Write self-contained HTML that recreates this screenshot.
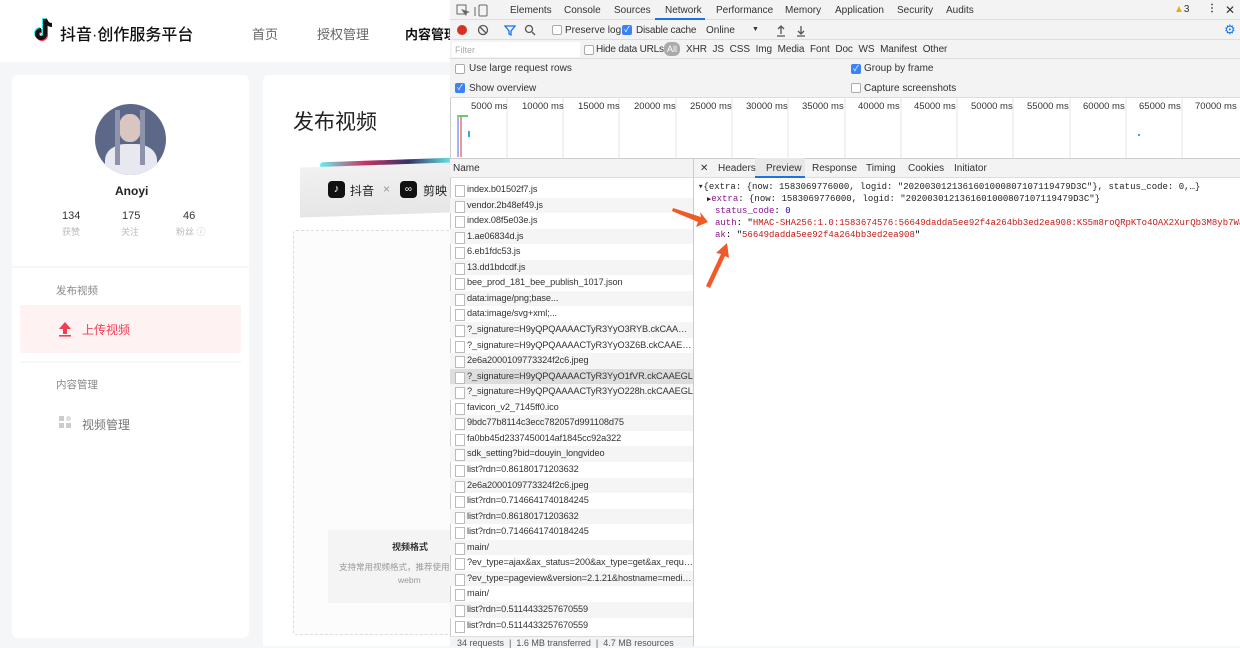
<!DOCTYPE html>
<html><head><meta charset="utf-8"><style>
*{margin:0;padding:0;box-sizing:border-box}
body{width:1240px;height:646px;overflow:hidden;position:relative;background:#f5f6f8;font-family:"Liberation Sans","Noto Sans CJK SC",sans-serif;}
.a{position:absolute;white-space:nowrap}
.dt{font-size:10px;color:#333}
.mono{font-family:"Liberation Mono","DejaVu Sans Mono",monospace;font-size:9px;overflow:hidden}
.cb{position:absolute;width:10px;height:10px;border:1px solid #aaa;border-radius:2px;background:#fff}
.cbk{position:absolute;width:10px;height:10px;border-radius:2px;background:#3b82f6;color:#fff;font-size:8px;line-height:10px;text-align:center}
.row{position:absolute;left:450px;width:243px;height:15.55px;font-size:9.2px;letter-spacing:-0.1px;color:#333;line-height:15.5px;padding-left:17px;white-space:nowrap;overflow:hidden;text-overflow:ellipsis}
.row:before{content:"";position:absolute;left:5px;top:3px;width:8px;height:10px;border:1px solid #bbb;background:#fff}
</style></head><body>
<div class="a" style="left:0;top:0;width:450px;height:62px;background:#fff"></div>
<svg class="a" style="left:34px;top:17px" width="22" height="26" viewBox="0 0 22 26"><path d="M11 2v15a4 4 0 1 1-4-4" fill="none" stroke="#25f4ee" stroke-width="4" transform="translate(-1,-1)"/><path d="M11 2v15a4 4 0 1 1-4-4" fill="none" stroke="#fe2c55" stroke-width="4" transform="translate(1,1)"/><path d="M11 2v15a4 4 0 1 1-4-4M11 2c1 4 4 6 7 6" fill="none" stroke="#111" stroke-width="4"/></svg>
<div class="a" style="left:60px;top:21px;font-size:16px;color:#111;font-weight:500">抖音·创作服务平台</div>
<div class="a" style="left:252px;top:24px;font-size:13px;color:#666">首页</div>
<div class="a" style="left:317px;top:24px;font-size:13px;color:#666">授权管理</div>
<div class="a" style="left:405px;top:24px;font-size:13px;color:#111;font-weight:bold">内容管理</div>
<div class="a" style="left:12px;top:75px;width:237px;height:563px;background:#fff;border-radius:6px"></div>
<div class="a" style="left:95px;top:104px;width:71px;height:71px;border-radius:50%;overflow:hidden;background:#5d6888">
<div class="a" style="left:24px;top:10px;width:22px;height:28px;border-radius:45%;background:#d9c6c0"></div>
<div class="a" style="left:10px;top:40px;width:52px;height:40px;border-radius:40% 40% 0 0;background:#e8e8f0"></div>
<div class="a" style="left:20px;top:6px;width:5px;height:55px;background:#8c93aa"></div>
<div class="a" style="left:45px;top:6px;width:5px;height:55px;background:#8c93aa"></div>
</div>
<div class="a" style="left:115px;top:184px;font-size:12px;color:#222;font-weight:bold">Anoyi</div>
<div class="a" style="left:62px;top:210px;font-size:11px;color:#333">134</div>
<div class="a" style="left:122px;top:210px;font-size:11px;color:#333">175</div>
<div class="a" style="left:183px;top:210px;font-size:11px;color:#333">46</div>
<div class="a" style="left:62px;top:225px;font-size:9px;color:#bbb">获赞</div>
<div class="a" style="left:121px;top:225px;font-size:9px;color:#bbb">关注</div>
<div class="a" style="left:176px;top:225px;font-size:9px;color:#bbb">粉丝 ⓘ</div>
<div class="a" style="left:12px;top:266px;width:237px;height:2px;background:#f5f6f8"></div>
<div class="a" style="left:56px;top:283px;font-size:10.5px;color:#888">发布视频</div>
<div class="a" style="left:20px;top:305px;width:221px;height:48px;background:#fef2f3;border-radius:3px"></div>
<svg class="a" style="left:58px;top:321px" width="14" height="16" viewBox="0 0 14 16"><path d="M7 1L1 8h4v5h4V8h4z" fill="#f23d54"/><rect x="1" y="14" width="12" height="1.6" fill="#f23d54"/></svg>
<div class="a" style="left:82px;top:321px;font-size:12px;color:#f23d54">上传视频</div>
<div class="a" style="left:20px;top:361px;width:221px;height:2px;background:#f5f6f8"></div>
<div class="a" style="left:56px;top:377px;font-size:10.5px;color:#888">内容管理</div>
<svg class="a" style="left:59px;top:416px" width="12" height="13"><rect x="0" y="0" width="5" height="5" fill="#ccc"/><rect x="7" y="0" width="5" height="5" fill="#ddd" rx="2.5"/><rect x="0" y="7" width="5" height="5" fill="#ccc"/><rect x="7" y="7" width="5" height="5" fill="#ccc"/></svg>
<div class="a" style="left:82px;top:416px;font-size:12px;color:#777">视频管理</div>
<div class="a" style="left:263px;top:75px;width:190px;height:571px;background:#fff;border-radius:6px 0 0 0"></div>
<div class="a" style="left:293px;top:106px;font-size:21px;color:#222">发布视频</div>
<div class="a" style="left:320px;top:160px;width:133px;height:6px;background:linear-gradient(90deg,#6ee,#c36,#336,#6ee);border-radius:3px;transform:rotate(-2deg)"></div>
<div class="a" style="left:300px;top:165px;width:153px;height:50px;background:linear-gradient(180deg,#f1f1f1,#e6e6e6);transform:skewY(-2deg)"></div>
<div class="a" style="left:328px;top:181px;width:17px;height:17px;background:#111;border-radius:4px;color:#fff;font-size:11px;text-align:center;line-height:17px">♪</div>
<div class="a" style="left:350px;top:182px;font-size:12px;color:#222">抖音</div>
<div class="a" style="left:383px;top:182px;font-size:12px;color:#999">×</div>
<div class="a" style="left:400px;top:181px;width:17px;height:17px;background:#111;border-radius:4px;color:#fff;font-size:10px;text-align:center;line-height:17px">∞</div>
<div class="a" style="left:423px;top:182px;font-size:12px;color:#222">剪映</div>
<div class="a" style="left:293px;top:230px;width:170px;height:405px;border:1px dashed #ddd;background:#fcfcfc;border-radius:3px"></div>
<div class="a" style="left:328px;top:530px;width:130px;height:73px;background:#f4f4f4"></div>
<div class="a" style="left:392px;top:540px;font-size:9px;color:#333;font-weight:bold">视频格式</div>
<div class="a" style="left:339px;top:561px;font-size:8.5px;color:#999">支持常用视频格式，推荐使用</div>
<div class="a" style="left:398px;top:575px;font-size:8.5px;color:#999">webm</div>
<div class="a" style="left:450px;top:0;width:790px;height:646px;background:#fff;border-left:1px solid #ccc"></div>
<div class="a" style="left:450px;top:0;width:790px;height:20px;background:#f3f3f3;border-bottom:1px solid #ddd"></div>
<svg class="a" style="left:456px;top:4px" width="34" height="13"><rect x="1" y="1" width="9" height="9" fill="none" stroke="#666"/><path d="M5 5l5 7 1-3 3-1z" fill="#666"/><rect x="23" y="1" width="8" height="11" rx="1" fill="none" stroke="#666"/><line x1="19" y1="3" x2="19" y2="12" stroke="#666"/></svg>
<div class="a" style="left:655px;top:0;width:50px;height:20px;border-bottom:2px solid #1a73e8"></div>
<div class="a dt" style="left:510px;top:5px;color:#333">Elements</div>
<div class="a dt" style="left:564px;top:5px">Console</div>
<div class="a dt" style="left:614px;top:5px">Sources</div>
<div class="a dt" style="left:665px;top:5px">Network</div>
<div class="a dt" style="left:716px;top:5px">Performance</div>
<div class="a dt" style="left:785px;top:5px">Memory</div>
<div class="a dt" style="left:835px;top:5px">Application</div>
<div class="a dt" style="left:897px;top:5px">Security</div>
<div class="a dt" style="left:946px;top:5px">Audits</div>
<div class="a dt" style="left:1174px;top:4px"><span style="color:#f2a900">▲</span>3</div>
<div class="a dt" style="left:1207px;top:3px;font-weight:bold">⋮</div>
<div class="a dt" style="left:1225px;top:3px;font-size:12px">✕</div>
<div class="a" style="left:450px;top:20px;width:790px;height:20px;background:#f3f3f3;border-bottom:1px solid #ddd"></div>
<div class="a" style="left:457px;top:25px;width:10px;height:10px;border-radius:50%;background:#d93025"></div>
<svg class="a" style="left:477px;top:24px" width="64" height="13"><circle cx="6" cy="6" r="4.5" fill="none" stroke="#555" stroke-width="1.3"/><line x1="3" y1="3" x2="9" y2="9" stroke="#555" stroke-width="1.3"/><path d="M28 2h10l-4 5v4l-2-1V7z" fill="none" stroke="#1a73e8" stroke-width="1.3"/><circle cx="52" cy="5" r="3.5" fill="none" stroke="#555" stroke-width="1.3"/><line x1="55" y1="8" x2="58" y2="11" stroke="#555" stroke-width="1.3"/></svg>
<div class="cb" style="left:552px;top:25px"></div><div class="a dt" style="left:565px;top:25px">Preserve log</div>
<div class="cbk" style="left:622px;top:25px">✓</div><div class="a dt" style="left:636px;top:25px;letter-spacing:-0.2px">Disable cache</div>
<div class="a dt" style="left:706px;top:25px">Online</div><div class="a dt" style="left:752px;top:26px;font-size:7px">▼</div>
<svg class="a" style="left:775px;top:24px" width="32" height="13"><path d="M6 2v8M3 5l3-3 3 3M2 12h8" fill="none" stroke="#555" stroke-width="1.3"/><path d="M26 2v8M23 7l3 3 3-3M22 12h8" fill="none" stroke="#555" stroke-width="1.3"/></svg>
<div class="a dt" style="left:1224px;top:22px;color:#1a73e8;font-size:13px">⚙</div>
<div class="a" style="left:450px;top:40px;width:790px;height:19px;background:#f3f3f3;border-bottom:1px solid #ddd"></div>
<div class="a" style="left:452px;top:42px;width:128px;height:15px;background:#fff"></div>
<div class="a dt" style="left:455px;top:45px;color:#aaa;font-size:9px">Filter</div>
<div class="cb" style="left:584px;top:45px"></div><div class="a dt" style="left:596px;top:44px;letter-spacing:-0.2px">Hide data URLs</div>
<div class="a dt" style="left:664px;top:42px;background:#aaa;color:#fff;border-radius:6px;padding:2px 3px;font-size:9px">All</div>
<div class="a dt" style="left:686px;top:44px;word-spacing:3px;letter-spacing:-0.1px">XHR JS CSS Img Media Font Doc WS Manifest Other</div>
<div class="a" style="left:450px;top:59px;width:790px;height:39px;background:#f3f3f3;border-bottom:1px solid #ddd"></div>
<div class="cb" style="left:455px;top:64px"></div><div class="a dt" style="left:469px;top:63px">Use large request rows</div>
<div class="cbk" style="left:455px;top:83px">✓</div><div class="a dt" style="left:469px;top:83px">Show overview</div>
<div class="cbk" style="left:851px;top:64px">✓</div><div class="a dt" style="left:864px;top:63px">Group by frame</div>
<div class="cb" style="left:851px;top:83px"></div><div class="a dt" style="left:864px;top:83px">Capture screenshots</div>
<svg class="a" style="left:450px;top:98px" width="790" height="60">
<g stroke="#e6e6e6"><line x1="57" y1="0" x2="57" y2="60"/><line x1="113" y1="0" x2="113" y2="60"/><line x1="169" y1="0" x2="169" y2="60"/><line x1="226" y1="0" x2="226" y2="60"/><line x1="282" y1="0" x2="282" y2="60"/><line x1="338" y1="0" x2="338" y2="60"/><line x1="395" y1="0" x2="395" y2="60"/><line x1="451" y1="0" x2="451" y2="60"/><line x1="507" y1="0" x2="507" y2="60"/><line x1="563" y1="0" x2="563" y2="60"/><line x1="620" y1="0" x2="620" y2="60"/><line x1="676" y1="0" x2="676" y2="60"/><line x1="732" y1="0" x2="732" y2="60"/></g>
<line x1="8" y1="17" x2="8" y2="59" stroke="#4264f5"/><line x1="11" y1="17" x2="11" y2="59" stroke="#d93025"/>
<line x1="8" y1="18" x2="18" y2="18" stroke="#6c6" stroke-width="2"/><rect x="18" y="33" width="2" height="6" fill="#3ad"/><rect x="688" y="36" width="2" height="2" fill="#3ad"/>
</svg>
<div class="a dt" style="left:450px;top:101px;width:790px;height:12px;font-size:9.5px">
<span class="a" style="left:21px">5000 ms</span><span class="a" style="left:72px">10000 ms</span><span class="a" style="left:128px">15000 ms</span><span class="a" style="left:184px">20000 ms</span><span class="a" style="left:240px">25000 ms</span><span class="a" style="left:296px">30000 ms</span><span class="a" style="left:352px">35000 ms</span><span class="a" style="left:408px">40000 ms</span><span class="a" style="left:464px">45000 ms</span><span class="a" style="left:521px">50000 ms</span><span class="a" style="left:577px">55000 ms</span><span class="a" style="left:633px">60000 ms</span><span class="a" style="left:689px">65000 ms</span><span class="a" style="left:745px">70000 ms</span></div>
<div class="a" style="left:450px;top:158px;width:790px;height:20px;background:#f3f3f3;border-top:1px solid #ccc;border-bottom:1px solid #ddd"></div>
<div class="a" style="left:693px;top:158px;width:1px;height:488px;background:#ccc"></div>
<div class="a dt" style="left:453px;top:163px">Name</div>
<div class="a dt" style="left:700px;top:163px">✕</div>
<div class="a" style="left:755px;top:158px;width:50px;height:20px;background:#e8e8e8;border-bottom:2px solid #1a73e8"></div>
<div class="a dt" style="left:718px;top:163px">Headers</div>
<div class="a dt" style="left:766px;top:163px">Preview</div>
<div class="a dt" style="left:812px;top:163px">Response</div>
<div class="a dt" style="left:866px;top:163px">Timing</div>
<div class="a dt" style="left:908px;top:163px">Cookies</div>
<div class="a dt" style="left:954px;top:163px">Initiator</div>
<div class="row" style="top:182px">index.b01502f7.js</div>
<div class="row" style="top:197.5px;background:#f5f5f5">vendor.2b48ef49.js</div>
<div class="row" style="top:213px">index.08f5e03e.js</div>
<div class="row" style="top:228.6px;background:#f5f5f5">1.ae06834d.js</div>
<div class="row" style="top:244.2px">6.eb1fdc53.js</div>
<div class="row" style="top:259.7px;background:#f5f5f5">13.dd1bdcdf.js</div>
<div class="row" style="top:275.3px">bee_prod_181_bee_publish_1017.json</div>
<div class="row" style="top:290.8px;background:#f5f5f5">data:image/png;base...</div>
<div class="row" style="top:306.4px">data:image/svg+xml;...</div>
<div class="row" style="top:322px;background:#f5f5f5">?_signature=H9yQPQAAAACTyR3YyO3RYB.ckCAAEGL</div>
<div class="row" style="top:337.5px">?_signature=H9yQPQAAAACTyR3YyO3Z6B.ckCAAEGL</div>
<div class="row" style="top:353px;background:#f5f5f5">2e6a2000109773324f2c6.jpeg</div>
<div class="row" style="top:368.6px;background:#ddd">?_signature=H9yQPQAAAACTyR3YyO1fVR.ckCAAEGL</div>
<div class="row" style="top:384.2px;background:#f5f5f5">?_signature=H9yQPQAAAACTyR3YyO228h.ckCAAEGL</div>
<div class="row" style="top:399.7px">favicon_v2_7145ff0.ico</div>
<div class="row" style="top:415.3px;background:#f5f5f5">9bdc77b8114c3ecc782057d991108d75</div>
<div class="row" style="top:430.8px">fa0bb45d2337450014af1845cc92a322</div>
<div class="row" style="top:446.4px;background:#f5f5f5">sdk_setting?bid=douyin_longvideo</div>
<div class="row" style="top:462px">list?rdn=0.86180171203632</div>
<div class="row" style="top:477.5px;background:#f5f5f5">2e6a2000109773324f2c6.jpeg</div>
<div class="row" style="top:493px">list?rdn=0.7146641740184245</div>
<div class="row" style="top:508.6px;background:#f5f5f5">list?rdn=0.86180171203632</div>
<div class="row" style="top:524.2px">list?rdn=0.7146641740184245</div>
<div class="row" style="top:539.7px;background:#f5f5f5">main/</div>
<div class="row" style="top:555.3px">?ev_type=ajax&amp;ax_status=200&amp;ax_type=get&amp;ax_request...</div>
<div class="row" style="top:570.8px;background:#f5f5f5">?ev_type=pageview&amp;version=2.1.21&amp;hostname=media...</div>
<div class="row" style="top:586.4px">main/</div>
<div class="row" style="top:602px;background:#f5f5f5">list?rdn=0.5114433257670559</div>
<div class="row" style="top:617.5px">list?rdn=0.5114433257670559</div>
<div class="a" style="left:450px;top:636px;width:243px;height:10px;background:#f3f3f3;border-top:1px solid #ddd"></div>
<div class="a dt" style="left:457px;top:638px;font-size:9px;color:#555">34 requests &nbsp;|&nbsp; 1.6 MB transferred &nbsp;|&nbsp; 4.7 MB resources</div>
<div class="a mono" style="left:698px;top:182px;width:542px;color:#222">▾{extra: {now: 1583069776000, logid: "2020030121361601000807107119479D3C"}, status_code: 0,…}</div>
<div class="a mono" style="left:707px;top:194px;width:533px;color:#222"><span style="font-size:7px">▶</span><span style="color:#881391">extra</span>: {now: 1583069776000, logid: "2020030121361601000807107119479D3C"}</div>
<div class="a mono" style="left:715px;top:206px"><span style="color:#881391">status_code</span>: <span style="color:#1c00cf">0</span></div>
<div class="a mono" style="left:715px;top:218px;width:525px"><span style="color:#881391">auth</span>: "<span style="color:#c41a16">HMAC-SHA256:1.0:1583674576:56649dadda5ee92f4a264bb3ed2ea908:KS5m8roQRpKTo4OAX2XurQb3M8yb7Wa</span></div>
<div class="a mono" style="left:715px;top:230px"><span style="color:#881391">ak</span>: "<span style="color:#c41a16">56649dadda5ee92f4a264bb3ed2ea908</span>"</div>
<svg class="a" style="left:665px;top:200px" width="80" height="95">
<path d="M8 8 L36 17 L35 12 L43 22 L31 27 L33 22 L7 11 Z" fill="#f05a28"/>
<path d="M41 86 L56 54 L51 53 L62 43 L64 58 L60 56 L45 88 Z" fill="#f05a28"/>
</svg>
</body></html>
